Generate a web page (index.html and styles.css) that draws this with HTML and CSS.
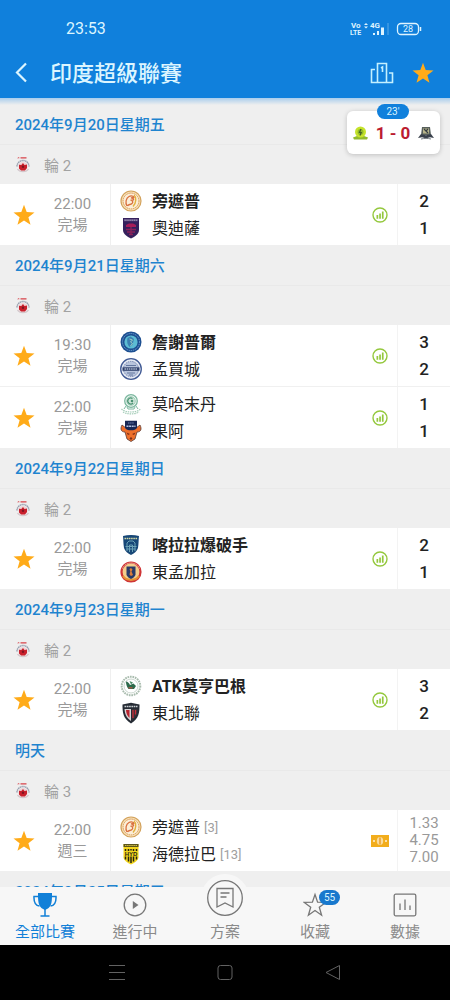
FILE: index.html
```html
<!DOCTYPE html>
<html lang="zh-Hant">
<head>
<meta charset="utf-8">
<meta name="viewport" content="width=device-width, initial-scale=1">
<title>印度超級聯賽</title>
<link rel="stylesheet" href="styles.css">
</head>
<body>
<svg class="defs" aria-hidden="true">
  <symbol id="star" viewBox="0 0 22 22"><path d="M11 .8l2.700 7.300 7.800.3-6.100 4.800 2.100 7.600L11 16.400l-6.500 4.400 2.100-7.600L.5 8.400l7.800-.3z" fill="#ffab19"/></symbol>
  <symbol id="league" viewBox="0 0 16 18">
    <path d="M2 2.200l2-1.200.5 1.200zM5.500 1.200h6v1.200h-6z" fill="#d8434a"/>
    <path d="M2 10.500a6 6 0 0 1 12 0" fill="none" stroke="#98a0b0" stroke-width="1.500" stroke-dasharray="1.400 .5"/>
    <path d="M2.500 13a6 4.500 0 0 0 11 0" fill="none" stroke="#d3c6ca" stroke-width="1.200"/>
    <circle cx="8" cy="10.500" r="4.600" fill="#f0d5d8"/>
    <path d="M4 8.800l2.300.2L8 7l1.500 2 2.500-.4v3.500l-2 2.300H6l-2-2z" fill="#c8202c"/>
    <circle cx="8" cy="10.800" r="1.200" fill="#7d1420"/>
  </symbol>
  <symbol id="stats" viewBox="0 0 16 16">
    <circle cx="8" cy="8" r="7" fill="#fff" stroke="#94c83d" stroke-width="1.400"/>
    <path d="M4.500 8h1.700v3.700H4.500zM7.200 6.500h1.700v5.200H7.200zM9.900 4.500h1.700v7.200H9.900z" fill="#94c83d"/>
  </symbol>
  <symbol id="punjab" viewBox="0 0 22 22">
    <circle cx="11" cy="11" r="10" fill="#f6dfb6" stroke="#d3a25c" stroke-width="1.200"/>
    <circle cx="11" cy="11" r="7.900" fill="#fbeed8" stroke="#dc9a55" stroke-width="1" stroke-dasharray="1.500 .7"/>
    <path d="M7 16c-2-3-1-8 2-9.500 2-1 5-.5 5 1l-3 .3c2 .5 3 1 2.500 2.200l-3 .2c2 .3 3 1.800 1.500 3.300-1.500 1.500-4 .5-4.500 2.500" fill="none" stroke="#d9703e" stroke-width="1.300"/>
    <path d="M14 5c2.500 2 2.500 8-1 11.500" fill="none" stroke="#e2b13e" stroke-width="1.400"/>
  </symbol>
  <symbol id="odisha" viewBox="0 0 22 22">
    <path d="M3 1h16v12c0 4-4 6.500-8 8.500C7 19.500 3 17 3 13z" fill="#35205c"/>
    <path d="M4 2h14v2.300H4z" fill="#58447b"/><path d="M4.500 3.200h13" stroke="#c8c1d8" stroke-width=".8" stroke-dasharray="1.300 .6"/>
    <path d="M6 8l3-1.500h4L16 8v2H6z" fill="#a81d58"/>
    <path d="M6 12.500h10M7 15h8M9 17.500h4M11 10v8" stroke="#8c2059" stroke-width="1.300"/>
  </symbol>
  <symbol id="jamshedpur" viewBox="0 0 22 22">
    <circle cx="11" cy="11" r="10.500" fill="#1d4f91"/>
    <circle cx="11" cy="11" r="8.500" fill="none" stroke="#79a9d9" stroke-width=".9" stroke-dasharray="1.200 .8"/>
    <circle cx="11" cy="11" r="6.600" fill="#5cbcd3"/>
    <path d="M7.500 7l3-1.500L14 8l-1.500 6-3 2C7.500 14 6.500 11 7.500 7z" fill="#3a80b2"/>
    <path d="M9.500 8l3 1-2 2 2 1.500-2 2.500" fill="none" stroke="#9fd0c4" stroke-width="1"/>
  </symbol>
  <symbol id="mumbai" viewBox="0 0 22 22">
    <circle cx="11" cy="11" r="10.300" fill="#e5eaf3" stroke="#415a94" stroke-width="1.300"/>
    <circle cx="11" cy="11" r="7.600" fill="#b9c5dd" stroke="#7182ae" stroke-width="1" stroke-dasharray="1.500 .8"/>
    <path d="M2.500 9.300h17v3.500h-17z" fill="#31436f"/><path d="M4.500 11h13" stroke="#e6edf8" stroke-width="1.200" stroke-dasharray="1.500 .7"/>
    <path d="M6 7.500h10M7 15h8M9 17h4" stroke="#63779f" stroke-width="1"/>
  </symbol>
  <symbol id="mohammedan" viewBox="0 0 22 22">
    <circle cx="11" cy="8" r="6.300" fill="#edf7f2" stroke="#7db8a0" stroke-width="1.300"/>
    <circle cx="11" cy="8" r="4.300" fill="#cfe7da" stroke="#8fc4ab" stroke-width=".8"/>
    <path d="M12.500 5.500a3 3 0 1 0 .5 4.500" fill="none" stroke="#4b9273" stroke-width="1.200"/>
    <circle cx="12" cy="8" r="1.300" fill="#4b9273"/>
    <path d="M6 13l-2 3M16 13l2 3M7 14l1 2h6l1-2" fill="none" stroke="#7db8a0"/>
    <path d="M1.500 16c4 4 15 4 19 0M3 19c4 2.500 12 2.500 16 0" fill="none" stroke="#a3ccb7" stroke-width="1.200" stroke-dasharray="1.500 .8"/>
  </symbol>
  <symbol id="goa" viewBox="0 0 22 22">
    <path d="M2 5c-2 4-1 7 3 7l2 7 4 2.500 4-2.500 2-7c4 0 5-3 3-7l-4 3H6z" fill="#ee6f2b" stroke="#5a3a34" stroke-width=".8"/>
    <path d="M5 .8h12v7c-1 2-3 2.500-6 2.500S6 9.800 5 7.800z" fill="#172754"/>
    <path d="M8 3h6" stroke="#7284b4" stroke-width="1.200" stroke-dasharray="1.500 .6"/>
    <path d="M6.500 6.300h9" stroke="#b8c5e4" stroke-width="1.600" stroke-dasharray="2 .6"/>
    <path d="M6.500 12.500l3.500 1.500-2 1zM15.500 12.500L12 14l2 1zM9.500 18.500l1.500-1.500 1.500 1.500L11 20z" fill="#7b2d19"/>
  </symbol>
  <symbol id="kerala" viewBox="0 0 22 22">
    <path d="M3 2c5-1.300 11-1.300 16 0-.5 4-.2 7-1 12-1 3.500-4 5.500-7 7-3-1.500-6-3.500-7-7-.8-5-.5-8-1-12z" fill="#174777"/>
    <path d="M4.500 4.500h13" stroke="#d3d9a5" stroke-width="1.600" stroke-dasharray="1.600 .6"/>
    <path d="M7 17V9l2-2h4l2 2v8M9.500 18v-7h3v7M5.500 12.500h11M6.500 15h9" fill="none" stroke="#6ba2b6" stroke-width="1"/>
  </symbol>
  <symbol id="eastbengal" viewBox="0 0 22 22">
    <circle cx="11" cy="11" r="9.500" fill="#f4cd8c" stroke="#cf3436" stroke-width="2.200"/>
    <path d="M2.500 7.500a9.300 9.300 0 0 1 17 0" fill="none" stroke="#f0c4b4" stroke-width="1" stroke-dasharray="1.300 .7"/>
    <path d="M3 15c3 5 13 5 16 0" fill="none" stroke="#e59334" stroke-width="2"/>
    <path d="M6.500 5.500h9v8.500c-1 2-2.500 3-4.500 4-2-1-3.500-2-4.500-4z" fill="#293a68"/>
    <path d="M9.500 8l1.500-1 1.500 1.500-1 2 1.500 3.500-2 1-1.500-1.500.8-3z" fill="#db7d3a"/>
  </symbol>
  <symbol id="bagan" viewBox="0 0 22 22">
    <circle cx="11" cy="11" r="9.300" fill="#fff" stroke="#a9bcae" stroke-width="2" stroke-dasharray="1.700 .8"/>
    <circle cx="11" cy="11" r="7" fill="#fff" stroke="#bdccc1" stroke-width=".8"/>
    <path d="M6 6.500c1.500 0 3 1.500 4 3.500l3.500-1.500L16 11l-2 3H8.500C7 12 6 9.500 6 6.500z" fill="#2c6a4b"/>
    <path d="M9.500 6l3.500 1.500-2 2z" fill="#4c8b67"/><path d="M8.500 12.800h4" stroke="#b35443" stroke-width="1.300"/>
  </symbol>
  <symbol id="northeast" viewBox="0 0 22 22">
    <path d="M2.500 2.500L11 .8l8.500 1.700c0 8-.5 14-8.500 19C3 16.500 2.500 10.500 2.500 2.500z" fill="#252b34"/>
    <path d="M4.500 4.500h13" stroke="#cbd0d4" stroke-width="1.600" stroke-dasharray="1.700 .6"/>
    <path d="M4.500 7H11v12C6.500 16 4.800 12 4.500 7z" fill="#d9d5d6"/>
    <path d="M6 8h3.500v8C7.200 14 6.200 11 6 8z" fill="#b7232f"/>
    <path d="M12 7h5.500c-.3 5-2 9-5.500 11.500z" fill="#3a3237"/>
    <path d="M13 8v8M15.500 8v4.500" stroke="#c92d39" stroke-width="1.300"/>
  </symbol>
  <symbol id="hyderabad" viewBox="0 0 22 22">
    <path d="M3.500 1h15v14c-1 3-4 5-7.500 6.500C7.500 20 4.500 18 3.500 15z" fill="#f2d51d"/>
    <path d="M3.500 1h15v3h-15z" fill="#5a541c"/><path d="M5 2.500h12" stroke="#f0dc58" stroke-width=".8" stroke-dasharray="1.500 .6"/>
    <path d="M5.500 6v2M8.500 6v2M11 6v1.500M13.500 6v2M16.500 6v2M5.500 13.500v3M8.500 13.500v5M11 13.500v6.500M13.500 13.500v5M16.500 13.500v3" stroke="#252314" stroke-width="1.500"/>
    <text x="11" y="13" text-anchor="middle" font-family="Liberation Sans" font-size="6" font-weight="700" fill="#252314">HYD</text>
  </symbol>
</svg>

<header class="top">
  <div class="status">
    <span class="clock">23:53</span>
    <svg class="signal" width="72" height="16" viewBox="0 0 72 16" role="img" aria-label="VoLTE 4G 28%">
      <g fill="#dff4ff" font-family="Roboto, sans-serif" font-weight="700">
        <text x="1" y="7" font-size="8">Vo</text><text x="0" y="14" font-size="7">LTE</text>
        <text x="20" y="7" font-size="8">4G</text>
        <path d="M14 4l2-2 2 2zM14 5.500h4l-2 2zM23 12h2v2h-2zM27 10h2v4h-2zM31 6.500h3V14h-3z"/>
      </g>
      <path d="M38 2v12" stroke="#5aa9e8"/>
      <rect x="47.500" y="2.500" width="21" height="11" rx="3.500" fill="none" stroke="#dff4ff" stroke-width="1.300"/>
      <path d="M70.500 6v4" stroke="#dff4ff" stroke-width="1.500"/>
      <text x="58" y="11" text-anchor="middle" font-family="Roboto, sans-serif" font-size="9" fill="#dff4ff">28</text>
    </svg>
  </div>
  <div class="appbar">
    <button class="icon-btn" aria-label="返回"><svg width="14" height="22" viewBox="0 0 14 22"><path d="M12 1.500L3 10.500l9 9" fill="none" stroke="#dcf5ff" stroke-width="2.200"/></svg></button>
    <h1>印度超級聯賽</h1>
    <button class="icon-btn" aria-label="排名"><svg width="24" height="22" viewBox="0 0 24 22"><path d="M7.500 20.500V1.500h9v19M5 7.500H1.500v13h21V11H19M11 6l1.500-1v5" fill="none" stroke="#c4f0ff" stroke-width="1.600"/></svg></button>
    <button class="icon-btn" aria-label="收藏"><svg width="22" height="22"><use href="#star"/></svg></button>
  </div>
</header>

<main>
  <aside class="live">
    <span class="minute">23'</span>
    <svg width="15" height="14" viewBox="0 0 15 14"><path d="M0 11.500l4-1.500h7l4 1.500-1 2H1z" fill="#91ba2d"/><circle cx="7.500" cy="6" r="5.500" fill="#c5e32b"/><circle cx="7.500" cy="6" r="3" fill="#93bc2a"/><path d="M8 3L6.500 6.500h1.700L7 9.500" fill="none" stroke="#45602a" stroke-width="1.200"/></svg>
    <strong>1 - 0</strong>
    <svg width="16" height="14" viewBox="0 0 16 14"><path d="M4 1h8l1 8H3z" fill="#58605d"/><path d="M5 2.500h6v5H5z" fill="#b9b68b"/><path d="M6 3l4 4M10 3L8 5" stroke="#343b42" stroke-width="1.200"/><path d="M0 12l3-4c3 1.500 7 1.500 10 0l3 4-4-.7c-2 1-6 1-8 0z" fill="#39404b"/><path d="M3 13c3-.8 7-.8 10 0" stroke="#777e84" fill="none"/></svg>
  </aside>

  <section>
    <h2>2024年9月20日星期五</h2>
    <h3><svg width="16" height="18"><use href="#league"/></svg>輪 2</h3>
    <article class="match">
      <button class="fav" aria-label="收藏"><svg width="22" height="22"><use href="#star"/></svg></button>
      <div class="time"><span>22:00</span><span>完場</span></div>
      <div class="teams">
        <div class="team win"><svg width="22" height="22"><use href="#punjab"/></svg>旁遮普</div>
        <div class="team"><svg width="22" height="22"><use href="#odisha"/></svg>奧迪薩</div>
      </div>
      <svg class="mark" width="16" height="16"><use href="#stats"/></svg>
      <div class="score"><span>2</span><span>1</span></div>
    </article>
  </section>

  <section>
    <h2>2024年9月21日星期六</h2>
    <h3><svg width="16" height="18"><use href="#league"/></svg>輪 2</h3>
    <article class="match">
      <button class="fav" aria-label="收藏"><svg width="22" height="22"><use href="#star"/></svg></button>
      <div class="time"><span>19:30</span><span>完場</span></div>
      <div class="teams">
        <div class="team win"><svg width="22" height="22"><use href="#jamshedpur"/></svg>詹謝普爾</div>
        <div class="team"><svg width="22" height="22"><use href="#mumbai"/></svg>孟買城</div>
      </div>
      <svg class="mark" width="16" height="16"><use href="#stats"/></svg>
      <div class="score"><span>3</span><span>2</span></div>
    </article>
    <article class="match">
      <button class="fav" aria-label="收藏"><svg width="22" height="22"><use href="#star"/></svg></button>
      <div class="time"><span>22:00</span><span>完場</span></div>
      <div class="teams">
        <div class="team"><svg width="22" height="22"><use href="#mohammedan"/></svg>莫哈末丹</div>
        <div class="team"><svg width="22" height="22"><use href="#goa"/></svg>果阿</div>
      </div>
      <svg class="mark" width="16" height="16"><use href="#stats"/></svg>
      <div class="score"><span>1</span><span>1</span></div>
    </article>
  </section>

  <section>
    <h2>2024年9月22日星期日</h2>
    <h3><svg width="16" height="18"><use href="#league"/></svg>輪 2</h3>
    <article class="match">
      <button class="fav" aria-label="收藏"><svg width="22" height="22"><use href="#star"/></svg></button>
      <div class="time"><span>22:00</span><span>完場</span></div>
      <div class="teams">
        <div class="team win"><svg width="22" height="22"><use href="#kerala"/></svg>喀拉拉爆破手</div>
        <div class="team"><svg width="22" height="22"><use href="#eastbengal"/></svg>東孟加拉</div>
      </div>
      <svg class="mark" width="16" height="16"><use href="#stats"/></svg>
      <div class="score"><span>2</span><span>1</span></div>
    </article>
  </section>

  <section>
    <h2>2024年9月23日星期一</h2>
    <h3><svg width="16" height="18"><use href="#league"/></svg>輪 2</h3>
    <article class="match">
      <button class="fav" aria-label="收藏"><svg width="22" height="22"><use href="#star"/></svg></button>
      <div class="time"><span>22:00</span><span>完場</span></div>
      <div class="teams">
        <div class="team win"><svg width="22" height="22"><use href="#bagan"/></svg>ATK莫亨巴根</div>
        <div class="team"><svg width="22" height="22"><use href="#northeast"/></svg>東北聯</div>
      </div>
      <svg class="mark" width="16" height="16"><use href="#stats"/></svg>
      <div class="score"><span>3</span><span>2</span></div>
    </article>
  </section>

  <section>
    <h2>明天</h2>
    <h3><svg width="16" height="18"><use href="#league"/></svg>輪 3</h3>
    <article class="match">
      <button class="fav" aria-label="收藏"><svg width="22" height="22"><use href="#star"/></svg></button>
      <div class="time"><span>22:00</span><span>週三</span></div>
      <div class="teams">
        <div class="team"><svg width="22" height="22"><use href="#punjab"/></svg>旁遮普<small>[3]</small></div>
        <div class="team"><svg width="22" height="22"><use href="#hyderabad"/></svg>海德拉巴<small>[13]</small></div>
      </div>
      <svg class="mark" width="18" height="12" viewBox="0 0 18 12"><path d="M0 0h18v12H0z" fill="#f2ad1c"/><ellipse cx="9" cy="6" rx="3.200" ry="3.900" fill="#fbdc9c"/><path d="M9 2.500v7" stroke="#e8941a" stroke-width="1.300"/><path d="M2 6h2M14 6h2" stroke="#fbe0a8" stroke-width="1.800"/></svg>
      <div class="score odds"><span>1.33</span><span>4.75</span><span>7.00</span></div>
    </article>
  </section>

  <section><h2>2024年9月25日星期三</h2></section>
</main>

<nav class="tabs">
  <a class="tab active" href="#all">
    <svg width="24" height="26" viewBox="0 0 24 26"><path d="M5 1h14v3c0 7-1 12-7 14-6-2-7-7-7-14z" fill="#1180d8"/><path d="M5 4.500H1c-.3 6 1.500 9 5.500 9.500M19 4.500h4c.3 6-1.500 9-5.500 9.500M12 17v6.500M7.500 24h9" fill="none" stroke="#1180d8" stroke-width="1.500"/></svg>
    <span>全部比賽</span>
  </a>
  <a class="tab" href="#live">
    <svg width="24" height="26" viewBox="0 0 24 26"><circle cx="12" cy="13" r="10.800" fill="none" stroke="#777" stroke-width="1.300"/><path d="M9.800 9l5.700 4-5.700 4z" fill="#777"/></svg>
    <span>進行中</span>
  </a>
  <a class="tab plan" href="#plan">
    <svg width="50" height="50" viewBox="0 0 50 50"><circle cx="25" cy="25" r="24" fill="#f7f7f7"/><circle cx="25" cy="25" r="17.300" fill="none" stroke="#777" stroke-width="1.300"/><path d="M17 15.500h16V34l-8-4-8 4zM20.500 20h9M20.500 24h6" fill="none" stroke="#777" stroke-width="1.300"/></svg>
    <span>方案</span>
  </a>
  <a class="tab" href="#fav">
    <svg width="24" height="26" viewBox="0 0 24 26"><path d="M12 2.500l2.600 7.700 8.100.2-6.400 4.900 2.300 7.900L12 18.500l-6.600 4.700 2.300-7.900-6.400-4.900 8.100-.2z" fill="none" stroke="#777" stroke-width="1.300"/></svg>
    <b class="badge">55</b>
    <span>收藏</span>
  </a>
  <a class="tab" href="#data">
    <svg width="24" height="26" viewBox="0 0 24 26"><rect x="1.200" y="2.200" width="21.600" height="21.600" rx="1.500" fill="none" stroke="#777" stroke-width="1.300"/><path d="M7 11.500V18M12 7.500V18M17 13.500V18" stroke="#777" stroke-width="1.300"/></svg>
    <span>數據</span>
  </a>
</nav>

<footer class="system">
  <button aria-label="最近"><svg width="18" height="18" viewBox="0 0 18 18"><path d="M1 1.500h16M1 8.500h16M1 15.500h16" stroke="#626262"/></svg></button>
  <button aria-label="主頁"><svg width="18" height="18" viewBox="0 0 18 18"><rect x="2" y="1.500" width="14" height="14" rx="2.500" fill="none" stroke="#626262"/></svg></button>
  <button aria-label="返回"><svg width="18" height="18" viewBox="0 0 18 18"><path d="M15.500 1.500v14L2 8.500z" fill="none" stroke="#626262" stroke-linejoin="round"/></svg></button>
</footer>
</body>
</html>
```
FILE: styles.css
```css
* { box-sizing: border-box; }
body {
  margin: 0;
  height: 100vh;
  display: flex;
  flex-direction: column;
  background: #efefef;
  color: #222;
  font-family: Roboto, "Noto Sans CJK TC", sans-serif;
}
svg { display: block; flex: none; }
.defs { display: none; }
button { border: 0; padding: 0; background: none; cursor: pointer; }
a { text-decoration: none; color: inherit; }
h1, h2, h3 { margin: 0; }

.top { flex: none; background: #1080dc; color: #dcf5ff; }
.status {
  display: flex;
  align-items: center;
  justify-content: space-between;
  height: 48px;
  padding: 10px 28px 0 66px;
}
.clock { font-size: 16px; line-height: 20px; }
.appbar { display: flex; align-items: center; height: 50px; padding: 0 16px 0 14px; }
.appbar h1 { flex: 1; padding: 2px 0 0 22px; font-size: 22px; font-weight: 500; line-height: 30px; }
.icon-btn + .icon-btn { margin-left: 18px; }

main {
  flex: 1;
  min-height: 0;
  overflow: hidden;
  position: relative;
  padding-top: 6px;
  background: linear-gradient(#a9cdec, #efefef 7px);
}
h2 {
  height: 41px;
  padding-left: 15px;
  border-bottom: 1px solid #e9e9e9;
  color: #1f84cf;
  font-size: 15px;
  font-weight: 500;
  line-height: 42px;
}
h3 {
  display: flex;
  align-items: center;
  gap: 13px;
  height: 39px;
  padding-left: 15px;
  color: #a2a2a2;
  font-size: 15px;
  font-weight: 400;
}
.match {
  display: grid;
  grid-template-columns: 48px 62px 1fr 34px 53px;
  align-items: center;
  height: 61px;
  background: #fff;
}
.match + .match { border-top: 1px solid #f0f0f0; height: 62px; }
.fav, .mark { justify-self: center; }
.time {
  display: grid;
  padding-right: 13px;
  color: #999;
  font-size: 15px;
  line-height: 21px;
  text-align: center;
}
.teams { display: grid; align-content: center; height: 100%; padding-left: 9px; border-left: 1px solid #efefef; }
.team { display: flex; align-items: center; gap: 10px; height: 27px; font-size: 16px; line-height: 27px; }
.team small { margin-left: -6px; color: #a0a0a0; font-size: 13px; }
.win { font-weight: 700; }
.score {
  display: grid;
  align-content: center;
  height: 100%;
  border-left: 1px solid #f3f3f3;
  font-size: 17px;
  font-weight: 500;
  line-height: 27px;
  text-align: center;
}
.odds { color: #999; font-size: 15px; font-weight: 400; line-height: 17px; }

.live {
  position: absolute;
  top: 13px;
  right: 10px;
  display: flex;
  align-items: center;
  justify-content: space-between;
  width: 93px;
  height: 43px;
  padding: 0 6px;
  border-radius: 6px;
  background: #fff;
  box-shadow: 0 1px 5px #0003;
}
.live strong { color: #bb1b31; font-size: 17px; line-height: 20px; }
.minute {
  position: absolute;
  top: -7px;
  left: 30px;
  width: 32px;
  border-radius: 8px;
  background: #1080dc;
  color: #dcf5ff;
  font-size: 10px;
  line-height: 15px;
  text-align: center;
}

.tabs { flex: none; display: flex; position: relative; height: 58px; background: #f7f7f7; color: #8a8a8a; }
.tab {
  position: relative;
  flex: 1;
  display: flex;
  flex-direction: column;
  align-items: center;
  gap: 4px;
  padding-top: 5px;
  font-size: 15px;
  line-height: 20px;
}
.active { color: #1180d8; }
.plan svg { margin: -19px 0 -5px; }
.badge {
  position: absolute;
  top: 3px;
  left: 50%;
  margin-left: 4px;
  width: 21px;
  border-radius: 8px;
  background: #1878cd;
  color: #dcf5ff;
  font-size: 10px;
  font-weight: 400;
  line-height: 15px;
  text-align: center;
}
.system { flex: none; display: flex; align-items: center; justify-content: space-evenly; height: 55px; padding: 0 18px; background: #000; }
.system button { width: 18px; }
```
